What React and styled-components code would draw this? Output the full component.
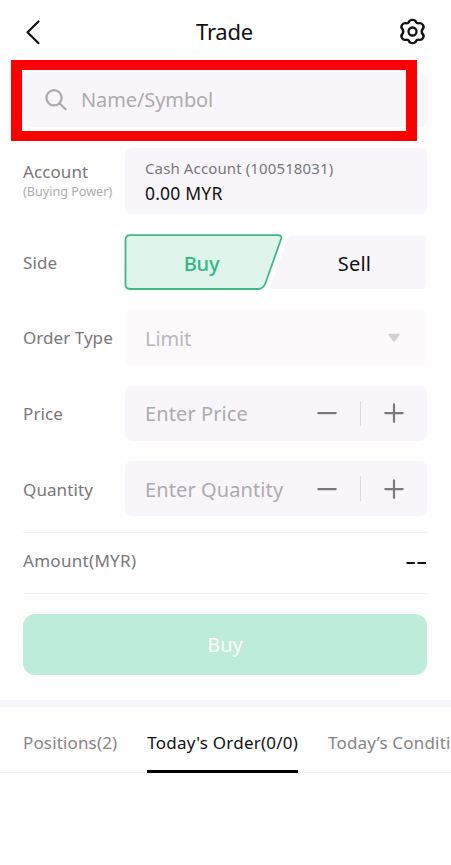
import { useState } from 'react'
import styled, { createGlobalStyle } from 'styled-components'

const GlobalStyle = createGlobalStyle`
  * {
    box-sizing: border-box;
  }
  body {
    margin: 0;
    background: #fefefe;
    font-family: 'Noto Sans', 'Open Sans', sans-serif;
    overflow: hidden;
  }
  button, input {
    font-family: inherit;
    border: none;
    background: none;
    padding: 0;
    outline: none;
  }
`

const Page = styled.div`
  width: 451px;
  height: 865px;
  overflow: hidden;
  display: flex;
  flex-direction: column;
`

const Header = styled.header`
  height: 72px;
  flex: none;
  padding: 16px 25px 0 23px;
  display: grid;
  grid-template-columns: 28px 1fr 28px;
  align-items: start;
`

const Title = styled.h1`
  margin: 0;
  font-size: 22px;
  line-height: 30px;
  font-weight: 400;
  letter-spacing: -0.2px;
  text-align: center;
  color: #111;
`

const IconBtn = styled.button`
  display: flex;
  align-items: center;
  height: 31px;
  justify-content: ${props => props.$end ? 'flex-end' : 'flex-start'};
`

const Search = styled.div`
  position: relative;
  flex: none;
  height: 55px;
  margin: 0 24px 21px 23px;
  padding-left: 22px;
  display: flex;
  align-items: center;
  gap: 14px;
  border-radius: 7px;
  background: #f8f6fa;
`

const Highlight = styled.div`
  position: absolute;
  left: -12px;
  top: -12px;
  width: 406px;
  height: 81px;
  border: solid #fe0000;
  border-width: 10px 11px;
  pointer-events: none;
`

const Input = styled.input`
  flex: 1;
  min-width: 0;
  font-size: 20px;
  line-height: 28px;
  padding-top: ${props => props.$drop || '0'};
  letter-spacing: ${props => props.$spacing || '0'};
  color: #111;
  &::placeholder {
    color: #adabae;
    opacity: 1;
  }
`

const Form = styled.div`
  flex: none;
  padding: 0 24px 0 23px;
  display: flex;
  flex-direction: column;
  gap: 20.6px;
`

const Row = styled.div`
  display: grid;
  grid-template-columns: 102px minmax(0, 1fr);
  align-items: center;
  height: ${props => props.$height || '55px'};
`

const Label = styled.div`
  font-size: 17px;
  line-height: 22px;
  letter-spacing: ${props => props.$spacing || '0.1px'};
  padding-bottom: ${props => props.$lift || '0'};
  padding-top: ${props => props.$drop || '0'};
  white-space: nowrap;
  color: #79777a;
  small {
    display: block;
    font-size: 12.6px;
    line-height: 17px;
    letter-spacing: 0;
    color: #adabae;
  }
`

const Field = styled.div`
  height: 100%;
  display: flex;
  align-items: center;
  padding-left: 20px;
  border-radius: 7px;
  background: ${props => props.$disabled ? '#fdfafc' : '#f8f6fa'};
`

const AccountField = styled(Field)`
  flex-direction: column;
  align-items: flex-start;
  padding-top: 9px;
`

const AccountName = styled.div`
  font-size: 15px;
  line-height: 23px;
  letter-spacing: 0.12px;
  color: #79777a;
`

const AccountValue = styled.div`
  font-size: 17.5px;
  line-height: 26px;
  letter-spacing: 0.2px;
  color: #111;
`

const SelectValue = styled.div`
  flex: 1;
  font-size: 20px;
  padding-top: 1px;
  letter-spacing: -0.1px;
  color: #b9b7ba;
`

const Caret = styled.svg`
  margin-right: 26px;
`

const Stepper = styled.div`
  flex: none;
  display: flex;
  align-items: center;
`

const StepBtn = styled.button`
  width: 66px;
  height: 30px;
  display: flex;
  align-items: center;
  justify-content: center;
`

const Divider = styled.div`
  width: 1px;
  height: 25px;
  background: #dddbdf;
`

const Sides = styled.div`
  position: relative;
  height: 57px;
  margin: -1px 0 -1px -1px;
  display: grid;
  grid-template-columns: 155px 1fr;
`

const SideShapes = styled.svg`
  position: absolute;
  left: 0;
  top: 0;
`

const SideBtn = styled.button`
  position: relative;
  font-size: 20px;
  padding: 3px 0 0 ${props => props.$buy ? '0' : '3px'};
  letter-spacing: ${props => props.$buy ? '-0.2px' : '0.2px'};
  font-weight: ${props => props.$buy ? 500 : 400};
  color: ${props => props.$buy ? '#2fb981' : '#111'};
`

const Amount = styled.div`
  height: 62px;
  flex: none;
  margin: 15.6px 24px 0 23px;
  padding-bottom: 3px;
  border-top: 1px solid #f3f2f4;
  border-bottom: 1px solid #f3f2f4;
  display: flex;
  align-items: center;
  justify-content: space-between;
`

const NoValue = styled.svg`
  margin-top: 4px;
`

const Submit = styled.button`
  flex: none;
  height: 61px;
  margin: 20px 24px 25px 23px;
  border-radius: 12px;
  background: #bdecd9;
  color: #fefefe;
  font-size: 20px;
`

const Tabs = styled.nav`
  flex: none;
  height: 73px;
  padding-left: 23px;
  display: flex;
  gap: 30px;
  border-top: 7px solid #f8f6fa;
  box-shadow: inset 0 -1px 0 #f1f0f2;
`

const Tab = styled.button`
  flex: none;
  font-size: 17px;
  letter-spacing: ${props => props.$spacing};
  padding-top: 9px;
  white-space: nowrap;
  color: ${props => props.$active ? '#111' : '#868487'};
  border-bottom: 3px solid ${props => props.$active ? '#000' : 'transparent'};
`

const BackIcon = () => (
  <svg width="20" height="28" viewBox="0 0 20 28" fill="none" stroke="#111" strokeWidth="2.2" strokeLinecap="round" strokeLinejoin="round">
    <path d="M15.500 3.500 4.500 14.300 15.500 25.200" />
  </svg>
)

const GearIcon = () => (
  <svg width="27" height="27" viewBox="0 0 27 27" fill="none" stroke="#111" strokeWidth="2.3" strokeLinejoin="round">
    <path transform="translate(-1.080 0) scale(1.080 1)" d="M10.200 3.900C10.800 2.400 11.500 1.900 13.500 1.900S16.200 2.400 16.800 3.900C17.300 5 18.300 5.500 19.600 5.200C21.300 4.800 22.200 5.200 23.200 7C24.200 8.800 24.100 9.700 23 10.900C21.800 12.200 21.800 14.800 23 16.100C24.100 17.300 24.200 18.200 23.200 20C22.200 21.800 21.300 22.200 19.600 21.800C18.300 21.500 17.300 22 16.800 23.100C16.200 24.600 15.500 25.100 13.500 25.100S10.800 24.600 10.200 23.100C9.700 22 8.700 21.500 7.400 21.800C5.700 22.200 4.800 21.800 3.800 20C2.800 18.200 2.900 17.300 4 16.100C5.200 14.800 5.200 12.200 4 10.900C2.900 9.700 2.800 8.800 3.800 7C4.800 5.200 5.700 4.800 7.400 5.200C8.700 5.500 9.700 5 10.200 3.900Z" />
    <circle cx="13.500" cy="13.500" r="4" />
  </svg>
)

const SearchIcon = () => (
  <svg width="22" height="22" viewBox="0 0 22 22" fill="none" stroke="#adabae" strokeWidth="2.2" strokeLinecap="round">
    <circle cx="9" cy="8.800" r="7.600" />
    <path d="M14.500 14.300 20.500 20.300" />
  </svg>
)

const MinusIcon = () => (
  <svg width="20" height="20" viewBox="0 0 20 20" stroke="#7b797c" strokeWidth="2.200" strokeLinecap="round">
    <path d="M1.300 10.100H18.700" />
  </svg>
)

const PlusIcon = () => (
  <svg width="20" height="20" viewBox="0 0 20 20" stroke="#7b797c" strokeWidth="2.200" strokeLinecap="round">
    <path d="M1.300 10.100H18.700M10 1.400V18.800" />
  </svg>
)

const NumberField = ({ placeholder }) => {
  const [value, setValue] = useState('')
  const step = (n) => setValue(String(Math.max(0, Number(value) + n)))
  return (
    <Field>
      <Input $spacing="0.1px" $drop="2px" placeholder={placeholder} value={value} onChange={(e) => setValue(e.target.value)} />
      <Stepper>
        <StepBtn onClick={() => step(-1)}><MinusIcon /></StepBtn>
        <Divider />
        <StepBtn onClick={() => step(1)}><PlusIcon /></StepBtn>
      </Stepper>
    </Field>
  )
}

const tabs = [
  { name: 'Positions(2)', spacing: '0.15px' },
  { name: "Today's Order(0/0)", spacing: '0.22px' },
  { name: 'Today’s Conditi', spacing: '0.18px' }
]

const App = () => {
  const [tab, setTab] = useState(1)

  return (
    <Page>
      <GlobalStyle />
      <Header>
        <IconBtn><BackIcon /></IconBtn>
        <Title>Trade</Title>
        <IconBtn $end><GearIcon /></IconBtn>
      </Header>

      <Search>
        <SearchIcon />
        <Input $spacing="-0.1px" placeholder="Name/Symbol" />
        <Highlight />
      </Search>

      <Form>
        <Row $height="66px">
          <Label $lift="2px">Account<small>(Buying Power)</small></Label>
          <AccountField>
            <AccountName>Cash Account (100518031)</AccountName>
            <AccountValue>0.00 MYR</AccountValue>
          </AccountField>
        </Row>
        <Row>
          <Label $drop="1px">Side</Label>
          <Sides>
            <SideShapes width="303" height="57" viewBox="0 0 303 57">
              <path d="M170 1.500H297Q302 1.500 302 6.500V50Q302 55 297 55H149Q145 55 147 51L163 7Q165 1.500 170 1.500Z" fill="#f8f6fa" />
              <path d="M6 1.200H154Q158.500 1.200 157 5.200L141.500 49Q139.300 55 134 55H6Q1.500 55 1.500 50.500V5.700Q1.500 1.200 6 1.200Z" fill="#dff5ec" stroke="#3fb888" strokeWidth="1.800" />
            </SideShapes>
            <SideBtn $buy>Buy</SideBtn>
            <SideBtn>Sell</SideBtn>
          </Sides>
        </Row>
        <Row>
          <Label $spacing="0.050px" $drop="1px">Order Type</Label>
          <Field $disabled>
            <SelectValue>Limit</SelectValue>
            <Caret width="14" height="10" viewBox="0 0 14 10">
              <path d="M2 1.500H12L7 8Z" fill="#d2d0d3" stroke="#d2d0d3" strokeWidth="1.500" strokeLinejoin="round" />
            </Caret>
          </Field>
        </Row>
        <Row>
          <Label $drop="2px">Price</Label>
          <NumberField placeholder="Enter Price" />
        </Row>
        <Row>
          <Label $drop="2px">Quantity</Label>
          <NumberField placeholder="Enter Quantity" />
        </Row>
      </Form>

      <Amount>
        <Label $spacing="0.3px">Amount(MYR)</Label>
        <NoValue width="21" height="4" viewBox="0 0 21 4" stroke="#111" strokeWidth="1.800">
          <path d="M0.500 2H8.800M11.500 2H20" />
        </NoValue>
      </Amount>
      <Submit>Buy</Submit>

      <Tabs>
        {tabs.map((t, i) => (
          <Tab key={t.name} $active={i === tab} $spacing={t.spacing} onClick={() => setTab(i)}>{t.name}</Tab>
        ))}
      </Tabs>
    </Page>
  )
}

export default App
